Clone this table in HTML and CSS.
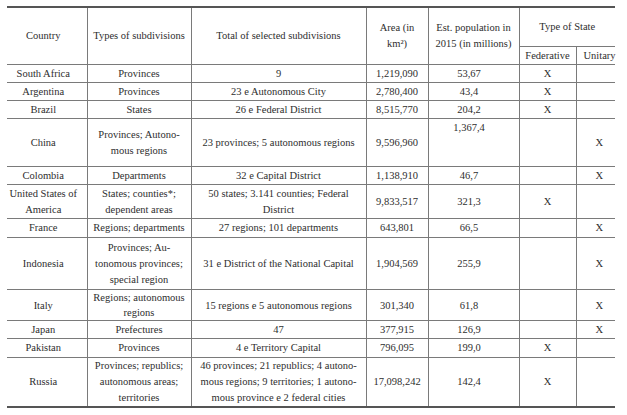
FILE: index.html
```html
<!DOCTYPE html>
<html>
<head>
<meta charset="utf-8">
<link rel="stylesheet" href="styles.css">
</head>
<body>
<div class="page">
<table class="data">
  <colgroup>
    <col class="c-country"><col class="c-types"><col class="c-total"><col class="c-area"><col class="c-pop"><col class="c-fed"><col class="c-uni">
  </colgroup>
  <thead>
    <tr class="hd1">
      <th rowspan="2" class="country">Country</th>
      <th rowspan="2">Types of subdivisions</th>
      <th rowspan="2">Total of selected subdivisions</th>
      <th rowspan="2">Area (in<br>km²)</th>
      <th rowspan="2">Est. population in<br>2015 (in millions)</th>
      <th colspan="2" class="state">Type of State</th>
    </tr>
    <tr class="hd2">
      <th>Federative</th>
      <th class="uni">Unitary</th>
    </tr>
  </thead>
  <tbody>
    <tr class="h18"><td class="country">South Africa</td><td>Provinces</td><td>9</td><td>1,219,090</td><td class="pop">53,67</td><td>X</td><td class="uni"></td></tr>
    <tr class="h18"><td class="country">Argentina</td><td>Provinces</td><td>23 e Autonomous City</td><td>2,780,400</td><td class="pop">43,4</td><td>X</td><td class="uni"></td></tr>
    <tr class="h18"><td class="country">Brazil</td><td>States</td><td>26 e Federal District</td><td>8,515,770</td><td class="pop">204,2</td><td>X</td><td class="uni"></td></tr>
    <tr class="h47"><td class="country">China</td><td>Provinces; Autono-<br>mous regions</td><td>23 provinces; 5 autonomous regions</td><td>9,596,960</td><td class="pop top">1,367,4</td><td></td><td class="uni">X</td></tr>
    <tr class="h18"><td class="country">Colombia</td><td>Departments</td><td>32 e Capital District</td><td>1,138,910</td><td class="pop">46,7</td><td></td><td class="uni">X</td></tr>
    <tr class="h34"><td class="country">United States of<br>America</td><td>States; counties*;<br>dependent areas</td><td>50 states; 3.141 counties; Federal<br>District</td><td>9,833,517</td><td class="pop">321,3</td><td>X</td><td class="uni"></td></tr>
    <tr class="h19"><td class="country">France</td><td>Regions; departments</td><td>27 regions; 101 departments</td><td>643,801</td><td class="pop">66,5</td><td></td><td class="uni">X</td></tr>
    <tr class="h52"><td class="country">Indonesia</td><td>Provinces; Au-<br>tonomous provinces;<br>special region</td><td>31 e District of the National Capital</td><td>1,904,569</td><td class="pop">255,9</td><td></td><td class="uni">X</td></tr>
    <tr class="h32"><td class="country">Italy</td><td>Regions; autonomous<br>regions</td><td>15 regions e 5 autonomous regions</td><td>301,340</td><td class="pop">61,8</td><td></td><td class="uni">X</td></tr>
    <tr class="h18"><td class="country">Japan</td><td>Prefectures</td><td>47</td><td>377,915</td><td class="pop">126,9</td><td></td><td class="uni">X</td></tr>
    <tr class="h19"><td class="country">Pakistan</td><td>Provinces</td><td>4 e Territory Capital</td><td>796,095</td><td class="pop">199,0</td><td>X</td><td class="uni"></td></tr>
    <tr class="h50 last"><td class="country">Russia</td><td>Provinces; republics;<br>autonomous areas;<br>territories</td><td>46 provinces; 21 republics; 4 autono-<br>mous regions; 9 territories; 1 autono-<br>mous province e 2 federal cities</td><td>17,098,242</td><td class="pop">142,4</td><td>X</td><td class="uni"></td></tr>
  </tbody>
</table>
</div>
</body>
</html>
```

FILE: styles.css
```css
html, body {
  margin: 0;
  padding: 0;
  background: #ffffff;
}

.page {
  padding: 6px 0 0 7px;
}

.data {
  border-collapse: collapse;
  width: 608px;
  table-layout: fixed;
  font-family: "Liberation Serif", "Times New Roman", serif;
  font-size: 10.5px;
  line-height: 16px;
  color: #2e2e2e;
  border-top: 2px solid #555555;
  border-bottom: 2px solid #555555;
}

.c-country { width: 80px; }
.c-types { width: 104px; }
.c-total { width: 175px; }
.c-area { width: 62px; }
.c-pop { width: 91px; }
.c-fed { width: 57px; }
.c-uni { width: 39px; }

.data th,
.data td {
  font-weight: normal;
  text-align: center;
  vertical-align: middle;
  padding: 0;
  white-space: nowrap;
  border: 1px solid #7a7a7a;
}

.data th:first-child,
.data td:first-child {
  border-left: none;
}

.data th:last-child,
.data td:last-child {
  border-right: none;
}

.data .uni {
  border-right: none;
  padding-left: 7px;
}

.data .country {
  padding-right: 7px;
}

.data td.pop {
  padding-right: 9px;
}

.data td.top {
  vertical-align: top;
  padding-top: 1px;
}

.hd1 th { height: 38px; }
.hd2 th { height: 17px; }

.h18 td { height: 17px; }
.h19 td { height: 18px; }
.h32 td { height: 30px; line-height: 15px; }
.h34 td { height: 33px; }
.h47 td { height: 46px; }
.h50 td { height: 47px; }
.h52 td { height: 51px; }

.last td {
  border-bottom: 2px solid #555555;
}
```
